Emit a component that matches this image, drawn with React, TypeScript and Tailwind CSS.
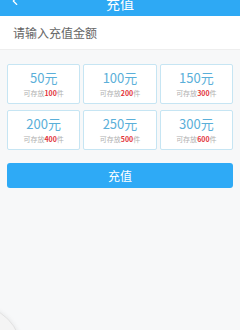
import { ChevronLeft } from 'lucide-react'

const PLANS = [
  { amount: 50, count: 100 },
  { amount: 100, count: 200 },
  { amount: 150, count: 300 },
  { amount: 200, count: 400 },
  { amount: 250, count: 500 },
  { amount: 300, count: 600 },
]

export default function App() {
  return (
    <div
      className="relative w-[240px] h-[330px] overflow-hidden bg-[#f7f8f9]"
      style={{ fontFamily: '"Noto Sans CJK SC", "Noto Sans", sans-serif' }}
    >
      {/* header */}
      <div className="h-[16px] bg-[#2ea9f4] flex items-start justify-center relative overflow-hidden">
        <ChevronLeft className="absolute left-[8px] -top-[6px] w-[14px] h-[14px] text-white" strokeWidth={2} />
        <span className="text-white text-[14px] leading-[16px] -mt-[5px]">充值</span>
      </div>

      {/* amount input */}
      <div className="h-[34px] bg-white border-b border-[#eeeeee] flex items-center px-[13px]">
        <span className="text-[12px] text-[#666666]">请输入充值金额</span>
      </div>

      {/* plans */}
      <div className="grid grid-cols-3 gap-x-[3px] gap-y-[6px] px-[7px] pt-[14px]">
        {PLANS.map(p => (
          <div
            key={p.amount}
            className="h-[40px] bg-white border border-[#c6e5f3] rounded-[2px] flex flex-col items-center justify-center"
          >
            <span className="text-[13px] leading-[16px] text-[#5aafd9]">{p.amount}元</span>
            <span className="text-[7px] leading-[10px] text-[#b0b0b0] mt-[2px]">
              可存放<span className="text-[#e2333a] font-bold">{p.count}</span>件
            </span>
          </div>
        ))}
      </div>

      {/* submit */}
      <div className="px-[7px] pt-[13px]">
        <button className="w-full h-[25px] bg-[#2eaaf6] rounded-[3px] text-white text-[12px] flex items-center justify-center">
          充值
        </button>
      </div>

      {/* floating shadow in corner */}
      <div className="absolute -left-[72px] top-[305px] w-[94px] h-[94px] rounded-full border border-[#e2e2e2] bg-[#f4f4f4] shadow-[0_0_5px_rgba(0,0,0,0.08)]" />
    </div>
  )
}
